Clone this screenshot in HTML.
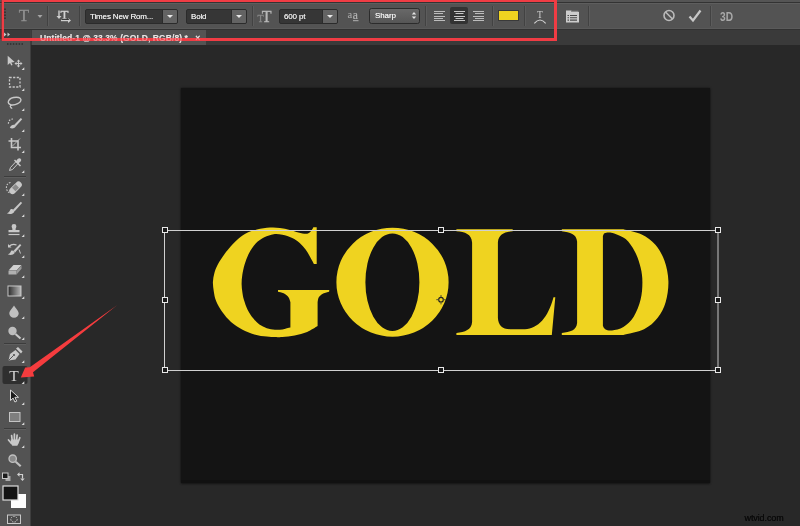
<!DOCTYPE html>
<html><head><meta charset="utf-8">
<style>
*{margin:0;padding:0;box-sizing:border-box}
html,body{width:800px;height:526px;overflow:hidden;background:#282828;font-family:"Liberation Sans",sans-serif}
#root{will-change:transform;position:relative;width:800px;height:526px;overflow:hidden;background:#282828}
.abs{position:absolute}
#opt{left:0;top:0;width:800px;height:30px;background:#535353;border-bottom:1px solid #323232;box-shadow:inset 0 -1px 0 #5a5a5a}
#opttop{left:0;top:0;width:800px;height:4px;background:#555;border-bottom:1px solid #5e5e5e}
#opttop:after{content:"";position:absolute;left:0;top:2px;width:800px;height:1px;background:#333}
#tabrow{left:0;top:30px;width:800px;height:15px;background:#3a3a3a}
#tab{left:32px;top:30px;width:174px;height:15px;background:#535353;color:#e4e4e4;font-size:8.5px;font-weight:bold;line-height:17px;padding-left:8px;white-space:nowrap;letter-spacing:.08px;overflow:hidden}
#tools{left:0;top:30px;width:31px;height:496px;background:#535353;border-right:1px solid #3e3e3e}
#toolhead{left:0;top:30px;width:30px;height:9px;background:#3a3a3a}
#canvas{left:181px;top:88px;width:529px;height:395px;background:#141414;box-shadow:0 0 2px 0 rgba(0,0,0,.5),0 1px 2px 0 rgba(0,0,0,.35);border-bottom:3px solid #111}
.gl{position:absolute;color:#efd320;font-family:"Liberation Serif",serif;font-weight:bold;font-size:162px;line-height:1;white-space:nowrap;transform-origin:0 0}
.dd{position:absolute;top:9px;height:15px;background:#363636;border:1px solid #2b2b2b;color:#ececec;font-size:8px;line-height:13px;padding-left:4px;border-radius:2px;white-space:nowrap;overflow:hidden;letter-spacing:-.15px;text-shadow:0 0 .5px #ccc}
.ddb{position:absolute;right:0;top:0;width:15px;height:13px;background:#636363;border-left:1px solid #2b2b2b}
.ddb:after{content:"";position:absolute;left:4px;top:5px;border:3px solid transparent;border-top:3px solid #e8e8e8;border-bottom:0}
.sep{position:absolute;width:1px;height:20px;top:6px;background:#424242;box-shadow:1px 0 0 #5c5c5c}
#sharp{position:absolute;left:369px;top:8px;width:51px;height:16px;background:linear-gradient(#686868,#565656);border:1px solid #2c2c2c;border-radius:2.5px;color:#f2f2f2;font-size:8px;line-height:14px;padding-left:5px;letter-spacing:-.1px;text-shadow:0 0 .5px #ddd}
#tabtxt{left:32px;top:30px;width:174px;height:15px;color:rgba(240,225,225,.45);font-size:8.5px;font-weight:bold;line-height:17px;padding-left:8px;white-space:nowrap;letter-spacing:.08px;overflow:hidden}
#redbox{left:2px;top:-1px;width:555px;height:42px;border:3px solid #f03c44;border-left-width:2px;box-shadow:-1px 0 0 rgba(200,30,40,.45)}
.hd{position:absolute;width:6px;height:6px;border:1px solid #e0e0e0;background:#141414}
#bbox{left:165px;top:230px;width:554px;height:140px;border:1px solid #d8d8d8}
#wm{left:744.5px;top:514.4px;font-size:9px;line-height:9px;color:#0a0a0a;letter-spacing:-0.1px;white-space:nowrap;text-shadow:0 0 .6px #0a0a0a}
</style></head><body>
<div id="root">
<div id="opt" class="abs">
  <div class="sep" style="left:47px"></div>
  <div class="sep" style="left:79px"></div>
  <div class="dd" style="left:85px;width:93px">Times New Rom...<div class="ddb"></div></div>
  <div class="dd" style="left:186px;width:61px">Bold<div class="ddb"></div></div>
  <div class="sep" style="left:252px"></div>
  <div class="dd" style="left:279px;width:59px">600 pt<div class="ddb"></div></div>
  <div id="sharp">Sharp</div>
  <div class="sep" style="left:425px"></div>
  <div class="abs" style="left:450px;top:7px;width:18px;height:17px;background:#333;border-radius:2px"></div>
  <div class="sep" style="left:492px"></div>
  <div class="abs" style="left:498px;top:10px;width:21px;height:11px;background:#efd320;border:1px solid #3a3a3a"></div>
  <div class="sep" style="left:524px"></div>
  <div class="sep" style="left:588px"></div>
  <div class="sep" style="left:710px"></div>
</div>
<div id="opttop" class="abs"></div>
<div id="tabrow" class="abs"></div>
<div id="tab" class="abs">Untitled-1 @ 33.3% (GOLD, RGB/8) * &nbsp;&nbsp;×</div>
<div id="tools" class="abs"></div>
<div id="toolhead" class="abs"></div>
<div id="canvas" class="abs"></div>
<svg id="icons" class="abs" style="left:0;top:0" width="800" height="526" viewBox="0 0 800 526" fill="none">
<path id="G" d="M313.3 227.2L316.7 227.2L316.7 263.9L313.9 263.9C313.4 263.0 312.1 260.7 310.8 258.3C309.5 255.9 307.7 252.3 305.8 249.7C303.9 247.1 302.0 244.9 299.7 242.9C297.4 240.9 295.1 239.2 292.2 237.9C289.3 236.6 285.5 235.4 282.4 234.8C279.3 234.2 276.7 233.8 273.7 234.2C270.7 234.6 267.3 235.8 264.3 237.3C261.3 238.9 258.3 240.8 255.7 243.5C253.1 246.2 250.8 249.9 248.9 253.4C247.1 256.9 245.7 260.9 244.6 264.5C243.5 268.1 242.8 271.8 242.3 275.0C241.8 278.2 241.6 281.1 241.6 284.0C241.6 286.9 242.0 289.9 242.4 292.5C242.8 295.1 243.0 296.9 243.9 299.8C244.8 302.7 246.1 306.6 247.6 309.7C249.1 312.8 251.2 315.8 253.2 318.3C255.2 320.8 257.1 322.9 259.4 324.5C261.7 326.1 264.2 327.3 266.8 328.2C269.4 329.1 272.4 329.5 275.0 329.7C277.6 329.9 279.8 329.8 282.4 329.4C285.0 329.0 289.1 327.9 290.4 327.6L290.4 302.2C290.1 301.4 289.6 298.8 288.5 297.3C287.4 295.8 285.4 294.2 283.6 293.3C281.9 292.4 278.9 292.0 278.0 291.7L278 290.1L329.3 290.1L329.1 291.7C328.1 292.0 324.9 292.7 323.2 293.6C321.5 294.5 319.7 295.9 318.8 297.3C317.9 298.7 317.8 301.4 317.6 302.2L317.6 326C315.9 327.0 310.9 330.3 307.1 331.9C303.3 333.5 298.8 334.6 294.7 335.4C290.6 336.2 285.7 336.6 282.4 336.9C279.1 337.2 277.6 337.2 275.0 337.1C272.4 337.1 270.2 337.1 266.8 336.6C263.4 336.2 258.5 335.6 254.4 334.4C250.3 333.2 246.0 331.5 242.1 329.4C238.2 327.3 234.3 324.9 231.0 322.0C227.7 319.1 224.8 315.6 222.3 312.1C219.8 308.6 217.5 304.4 216.1 301.0C214.7 297.6 214.3 294.7 213.8 291.5C213.3 288.3 212.8 285.1 212.9 282.0C213.0 278.9 213.6 275.9 214.4 273.0C215.2 270.1 215.9 268.0 217.8 264.5C219.7 261.0 223.0 256.0 226.0 252.1C229.0 248.2 232.6 244.1 235.9 241.0C239.2 237.9 242.3 235.5 245.8 233.6C249.3 231.7 252.9 230.6 256.9 229.6C260.9 228.6 266.2 227.9 270.0 227.6C273.8 227.3 276.6 227.6 279.9 228.0C283.2 228.4 286.7 229.2 289.8 229.9C292.9 230.6 295.7 231.8 298.4 232.4C301.1 233.1 303.9 233.8 305.8 233.8C307.7 233.8 308.5 233.2 309.6 232.4C310.7 231.6 312.0 229.6 312.6 228.7C313.2 227.8 313.2 227.4 313.3 227.2z" fill="#efd320"/>
<path d="M336.400 282.200a56.100 54.500 0 1 0 112.200 0a56.100 54.500 0 1 0 -112.200 0zM365.400 282.200a27 48.800 0 1 0 54 0a27 48.800 0 1 0 -54 0z" fill-rule="evenodd" fill="#efd320"/>
<path d="M456.4 229.3H512.7V231.3C505 232 498.5 234 497.9 242.5V317.8C498.2 325 502 329.2 510 329.2H525C538 328.5 548 318 553.5 297.3L555.3 297.3L551.8 334.9H456.4V332.9C465 332 471.5 330 472.1 322V242.5C471.5 234 465 232 456.4 231.3z" fill="#efd320"/>
<path d="M561.8 229.3H623.4C626.5 230.2 636.4 231.9 641.7 234.5C647.0 237.1 651.6 240.4 655.4 244.8C659.2 249.2 662.3 254.7 664.5 260.8C666.7 266.9 668.2 274.5 668.4 281.3C668.6 288.1 667.5 295.8 665.7 301.9C663.9 308.0 661.3 313.2 657.7 317.8C654.1 322.4 649.7 326.4 644.0 329.2C638.3 332.0 626.8 333.9 623.4 334.9H561.8V332.9C570 332 576.5 330.5 577.1 323V241.5C576.5 234 570 232.2 561.8 231.3zM602.9 236C603.2 235.5 603.5 233.8 604.5 233.2C605.5 232.6 607.0 232.4 608.6 232.4C610.2 232.4 611.4 232.3 614.3 233.4C617.1 234.5 622.3 236.1 625.7 239.1C629.1 242.1 632.4 246.9 634.9 251.7C637.4 256.4 639.4 262.5 640.6 267.6C641.9 272.7 642.4 277.2 642.4 282.5C642.4 287.8 642.0 293.9 640.6 299.6C639.2 305.3 636.6 312.1 633.7 316.7C630.8 321.3 627.0 324.7 623.4 327.0C619.8 329.3 615.0 330.0 612.0 330.4C609.0 330.8 606.7 330.0 605.2 329.2C603.7 328.4 603.3 326.4 602.9 325.8z" fill-rule="evenodd" fill="#efd320"/>
<!-- options bar icons -->
<path d="M5 8.500v12" stroke="#3a2a2c" stroke-width="1.600" stroke-dasharray="1.500 1.500"/>
<g font-family="Liberation Serif" >
<text x="18.700" y="21" font-size="17" fill="#909090" stroke="#909090" stroke-width=".3">T</text>
<path d="M37.5 15h5l-2.5 3z" fill="#a5a5a5"/>
<!-- orientation -->
<text x="60.500" y="18.500" font-size="13" fill="#d2d2d2" stroke="#d2d2d2" stroke-width=".35">T</text>
<path d="M59 10.500v7" stroke="#cfcfcf" stroke-width="1.400"/>
<path d="M56.5 16h5l-2.5 3z" fill="#cfcfcf"/>
<path d="M61 20.500h8" stroke="#cfcfcf" stroke-width="1.400"/>
<path d="M68 18v5l3-2.5z" fill="#cfcfcf"/>
<path d="M62 19.3h7" stroke="#2a2a2a" stroke-width="1"/>
<!-- tT -->
<text x="257.500" y="21.500" font-size="10" fill="#8a8a8a" stroke="#8a8a8a" stroke-width=".3">T</text>
<text x="261.800" y="21.500" font-size="16" fill="#b8b8b8" stroke="#b8b8b8" stroke-width=".35">T</text>
<!-- aa -->
<text x="347.500" y="17.500" font-size="10.500" fill="#b0b0b0">a</text>
<text x="352.800" y="19.300" font-size="11.500" fill="#b4b4b4" stroke="#b4b4b4" stroke-width=".2">a</text>
<path d="M353 20.700h5.500" stroke="#b0b0b0" stroke-width="1"/>
<!-- warp -->
<text x="537" y="18" font-size="9.500" fill="#cfcfcf">T</text>
</g>
<path d="M534.300 23.300q5.700-6.600 11.400 0" stroke="#cfcfcf" stroke-width="1.200" fill="none"/>
<!-- sharp arrows -->
<path d="M411.800 14.400h4.400l-2.200-2.500z M411.800 16.400h4.400l-2.200 2.500z" fill="#e4e4e4"/>
<!-- align left -->
<g stroke="#bcbcbc" stroke-width="1">
<path d="M434 11.5h11M434 13.5h9M434 16.5h11M434 18.5h9M434 20.5h11"/>
<path d="M454 11.5h11M455.5 13.5h8M454 16.5h11M455.5 18.5h8M454 20.5h11" stroke="#c6c6c6"/>
<path d="M473 11.5h11M475 13.5h9M473 16.5h11M475 18.5h9M473 20.5h11"/>
</g>
<!-- panel icon -->
<g>
<path d="M566 10.500h5.500v1.500h7.500v10.500h-13z" fill="#cdcdcd"/>
<path d="M572 10.800h6.500v1h-6.500z" fill="#9a9a9a"/>
<path d="M570 15.500h7M570 17.800h7M570 20.100h7" stroke="#4a4a4a" stroke-width="1.100"/>
<path d="M567.500 15.500h1.500M567.500 17.800h1.500M567.500 20.100h1.500" stroke="#4a4a4a" stroke-width="1.100"/>
</g>
<!-- cancel -->
<circle cx="669" cy="15.500" r="5" stroke="#bababa" stroke-width="1.6" fill="none"/>
<path d="M665.500 12l7 7" stroke="#bababa" stroke-width="1.6"/>
<!-- check -->
<path d="M689.5 16.5l3.5 4 7.5-10" stroke="#c8c8c8" stroke-width="2.2" fill="none"/>
<!-- 3D -->
<text x="720" y="21" font-family="Liberation Sans" font-size="12" font-weight="bold" fill="#a8a8a8" textLength="13" lengthAdjust="spacingAndGlyphs">3D</text>
<!-- toolbar -->
<path d="M4 32.5l2.5 2-2.5 2z M7.5 32.5l2.5 2-2.5 2z" fill="#c8c8c8"/>
<path d="M7 44h16" stroke="#2e2e2e" stroke-width="1.6" stroke-dasharray="1.5 1.4"/>
<g fill="#c8c8c8" stroke="none">
<!-- corner triangles -->
<path d="M24.300 67.3v2.700h-2.700zM24.300 88.3v2.700h-2.700zM24.300 108.3v2.700h-2.700zM24.300 129.3v2.700h-2.700zM24.300 150.3v2.700h-2.700zM24.300 170.3v2.700h-2.700zM24.300 193.3v2.700h-2.700zM24.300 214.3v2.700h-2.700zM24.300 234.3v2.700h-2.700zM24.300 255.3v2.700h-2.700zM24.300 275.3v2.700h-2.700zM24.300 296.3v2.700h-2.700zM24.300 316.3v2.700h-2.700zM24.300 337.3v2.700h-2.700zM24.300 360.3v2.700h-2.700zM24.300 381.3v2.700h-2.700zM24.300 402.3v2.700h-2.700zM24.300 422.3v2.700h-2.700zM24.300 445.3v2.700h-2.700z" fill="#d8d8d8"/>
<!-- move -->
<path d="M7.700 55.800v9.200l2.300-2 1.300 2.600 1.300-.6-1.300-2.600 3.400-.4z"/>
<path d="M18.500 59.500l1.8 2h-1.200v1.400h1.400v-1.200l2 1.800-2 1.800v-1.200h-1.400v1.400h1.200l-1.800 2-1.800-2h1.200v-1.400h-1.400v1.200l-2-1.800 2-1.800v1.200h1.400v-1.400h-1.200z"/>
</g>
<!-- marquee -->
<rect x="9.500" y="77.500" width="10.500" height="9.500" stroke="#c8c8c8" stroke-width="1.300" stroke-dasharray="2.200 1.400" fill="none"/>
<!-- lasso -->
<path d="M11.500 105c-2.500-.5-3.800-2.200-3-4 1-2.300 4.500-3.800 8-3.800 3.200 0 5 1.500 4.300 3.500-.8 2.300-4.800 4.300-8.300 4.300-1.800 0-2.600 1-2 2 .4.700 1.200.8 1.200 1.800" stroke="#c8c8c8" stroke-width="1.400" fill="none"/>
<!-- quick select -->
<path d="M14.300 124.800l6.500-6.800 1.400 1.300-6.300 7z" fill="#c8c8c8"/>
<path d="M9.800 127.800c1.200-3.300 4.700-4 6.300-2-1 2.500-4 3.300-6.300 2z" fill="#c8c8c8"/>
<path d="M13 119c-3 0-5 2.500-4.500 5.500" stroke="#c8c8c8" stroke-width="1.200" stroke-dasharray="1.600 1.300" fill="none"/>
<!-- crop -->
<path d="M11.500 138v9.500h9.500M8.500 141h9.500v9.500" stroke="#c8c8c8" stroke-width="1.600" fill="none"/>
<path d="M12.500 146l7.500-7.500" stroke="#c8c8c8" stroke-width=".8"/>
<!-- eyedropper -->
<path d="M9.500 170.500l1-3 6-6.500 2 2-6 6.500z" stroke="#c8c8c8" stroke-width="1" fill="none"/>
<path d="M15.500 161.500l1.500-1.500c.5-1.500 2.500-2.500 3.700-1.300s.2 3.200-1.300 3.700l-1.500 1.500z" fill="#c8c8c8"/>
<path d="M14.500 160l6 6" stroke="#c8c8c8" stroke-width="1.500"/>
<!-- sep -->
<path d="M4 176.500h22M4 343.500h22M4 428.500h22" stroke="#3c3c3c" stroke-width="1"/>
<path d="M4 177.500h22M4 344.500h22M4 429.500h22" stroke="#5e5e5e" stroke-width="1"/>
<!-- healing -->
<g transform="rotate(-45 15 188)"><rect x="8" y="185" width="15" height="6.500" rx="3.200" fill="#c8c8c8"/><rect x="13" y="185.800" width="5" height="4.900" fill="#8a8a8a"/></g>
<path d="M10.500 182.500c-3 .5-4.500 3-4 6s2 4 4 4.500" stroke="#c8c8c8" stroke-width="1.100" stroke-dasharray="1.600 1.300" fill="none"/>
<!-- brush -->
<path d="M13 209.800l7.800-8 1.300 1.200-7.400 8.300z" fill="#c8c8c8"/>
<path d="M6.800 213.300c2-.5 3-2.200 3.800-4 1.800-.8 3.800.8 3.800 2.500-1.500 2.300-5 3-7.600 1.500z" fill="#c8c8c8"/>
<!-- stamp -->
<path d="M12.300 230c.6-1.300-.7-2.200-.7-3.700a2.400 2.400 0 0 1 4.800 0c0 1.500-1.300 2.400-.7 3.700h3.800v2.300h-11v-2.300z" fill="#c8c8c8"/>
<path d="M8.500 234.500h11" stroke="#c8c8c8" stroke-width="1.200"/>
<!-- history brush -->
<path d="M13.500 250.800l6.500-6.800 1.300 1.200-6.200 7.200z" fill="#c8c8c8"/>
<path d="M7.800 254.300c2-.5 2.800-2 3.400-3.500 1.700-.7 3.500.8 3.500 2.300-1.500 2-4.500 2.400-6.900 1.200z" fill="#c8c8c8"/>
<path d="M9 246.500c2-2 5-2.500 7.500-1.500" stroke="#c8c8c8" stroke-width="1.200" fill="none"/>
<path d="M8 244v3.500h3.500z" fill="#c8c8c8"/>
<path d="M19 249.500l1.500 4" stroke="#c8c8c8" stroke-width="1"/>
<!-- eraser -->
<path d="M8.500 270.500l5-5.500h8l-5 5.500z" fill="#d0d0d0"/>
<path d="M8.500 271h8v3.500h-8z" fill="#b0b0b0"/>
<path d="M16.500 271l5-5.500v3.200l-5 5.800z" fill="#999"/>
<!-- gradient -->
<defs><linearGradient id="gr" x1="0" x2="1"><stop offset="0" stop-color="#2a2a2a"/><stop offset="1" stop-color="#b8b8b8"/></linearGradient></defs>
<rect x="8" y="286" width="13" height="10" fill="url(#gr)" stroke="#c8c8c8" stroke-width="1"/>
<!-- drop -->
<path d="M14 305.500c1.500 3 4.700 5 4.700 8a4.700 4.200 0 0 1-9.400 0c0-3 3.200-5 4.700-8z" fill="#c0c0c0"/>
<!-- dodge -->
<circle cx="12.500" cy="331" r="4.200" fill="#bdbdbd"/>
<path d="M15.500 334l5 4.500" stroke="#c8c8c8" stroke-width="2"/>
<!-- pen -->
<path d="M8.500 360.500l1.500-6.500 5.500-4 4 4-4 5.500z" fill="#c8c8c8"/>
<path d="M8.500 360.500l5-5" stroke="#535353" stroke-width="1"/>
<circle cx="14" cy="355" r="1.100" fill="#535353"/>
<path d="M16 348.500l2-1.500 4.500 4.500-1.500 2z" fill="#c8c8c8"/>
<!-- type selected -->
<rect x="2.500" y="366" width="25" height="18" rx="2" fill="#2f2f2f"/>
<text x="9.200" y="380.600" font-family="Liberation Serif" font-size="15.500" fill="#d6d6d6">T</text>
<path d="M24.300 381.3v2.700h-2.700z" fill="#d8d8d8"/>
<!-- path select -->
<path d="M10.500 390v10.500l2.600-2.400 1.800 3.900 1.800-.8-1.800-3.900h3.600z" fill="#1a1a1a" stroke="#d8d8d8" stroke-width="1"/>
<!-- rectangle -->
<rect x="9.500" y="412.500" width="10.500" height="9" fill="#7e7e7e" stroke="#c4c4c4" stroke-width="1"/>
<!-- hand -->
<path d="M10.800 439.500h8.400l-.4 3.500-1.500 2.700h-5l-1.500-2.500z" fill="#c8c8c8"/>
<path d="M12.300 441l-.7-5.300M14.400 441v-6.800M16.500 441l.6-5.800M18.400 441.500l1.400-3.800M11.300 443.300l-2.800-3.300" stroke="#c8c8c8" stroke-width="1.700" stroke-linecap="round" fill="none"/>
<!-- zoom -->
<circle cx="12.700" cy="458.700" r="3.700" fill="#8a8a8a" stroke="#c0c0c0" stroke-width="1.300"/>
<path d="M15.700 461.700l5 4.500" stroke="#c0c0c0" stroke-width="2.200"/>
<!-- default colors -->
<rect x="5.500" y="476" width="5" height="5" fill="#a8a8a8"/>
<rect x="2.500" y="473" width="5.500" height="5.500" fill="#1a1a1a" stroke="#c8c8c8" stroke-width="1"/>
<!-- swap -->
<path d="M19 474.500h3.500v4" stroke="#d0d0d0" stroke-width="1.200" fill="none"/>
<path d="M17 474.500l2.500-2.200v4.400z M22.500 481l-2.200-2.500h4.400z" fill="#d0d0d0"/>
<!-- fg/bg -->
<rect x="11" y="494" width="15" height="14" fill="#fdfdfd"/>
<rect x="3" y="486" width="15" height="14" fill="#141414" stroke="#dcdcdc" stroke-width="1.200"/>

<!-- quick mask -->
<rect x="7.500" y="515" width="13" height="8.500" fill="#4a4a4a" stroke="#c8c8c8" stroke-width="1"/>
<ellipse cx="14" cy="519.300" rx="3.200" ry="2.800" fill="none" stroke="#c8c8c8" stroke-width="1" stroke-dasharray="1.500 1.100"/>
<!-- bbox -->
<path d="M164.500 230.500H718M164.500 370.500H718M164.500 230.500V370.500" stroke="#d0d0d0" stroke-width="1" fill="none"/><path d="M718 230.500V370.500" stroke="#c4c4c4" stroke-width="1" fill="none"/>
<g fill="#1a1a1a" stroke="#e8e8e8" stroke-width="1">
<rect x="162.500" y="227.500" width="5" height="5"/><rect x="438.500" y="227.500" width="5" height="5"/><rect x="715.500" y="227.500" width="5" height="5"/>
<rect x="162.500" y="297.500" width="5" height="5"/><rect x="715.500" y="297.500" width="5" height="5"/>
<rect x="162.500" y="367.500" width="5" height="5"/><rect x="438.500" y="367.500" width="5" height="5"/><rect x="715.500" y="367.500" width="5" height="5"/>
</g>
<g fill="none"><circle cx="441" cy="299.700" r="2.300" stroke="#1e1e1e" stroke-width="1.100"/><path d="M441 295v2.200M441 302.200v2.200M436.300 299.700h2.200M443.500 299.700h2.200" stroke="#4a4a3a" stroke-width="1"/></g>
<!-- red arrow -->
<path d="M117 305.300L29.800 367.300L25.200 367.600L20.800 377.600L34.200 376.600L33 372.300z" fill="#f53c3e"/>
</svg>
<div id="redbox" class="abs"></div>
<div id="tabtxt" class="abs">Untitled-1 @ 33.3% (GOLD, RGB/8) * &nbsp;&nbsp;×</div>
<div id="wm" class="abs">wtvid.com</div>
</div>
</body></html>
